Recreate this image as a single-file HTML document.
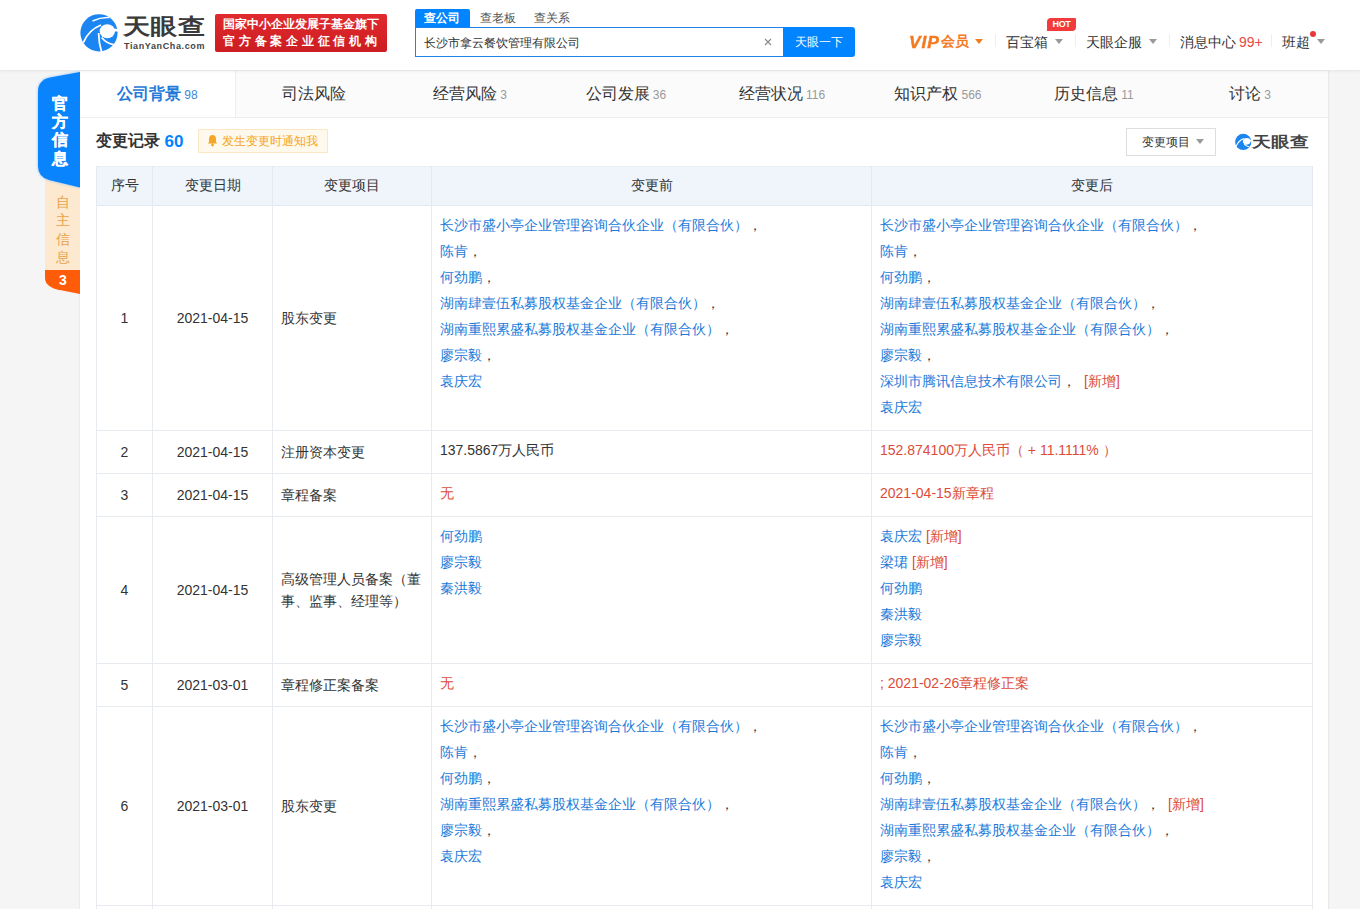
<!DOCTYPE html>
<html><head><meta charset="utf-8">
<style>
*{box-sizing:border-box;margin:0;padding:0}
html,body{width:1360px;height:909px;overflow:hidden}
body{background:#f5f5f5;font-family:"Liberation Sans",sans-serif;color:#333;font-size:14px;position:relative}
.abs{position:absolute}
#hdr{position:absolute;left:0;top:0;width:1360px;height:70px;background:#fff;box-shadow:0 1px 3px rgba(0,0,0,.08);z-index:5}
.nowrap{white-space:nowrap}
.tri{width:0;height:0;border-left:4.5px solid transparent;border-right:4.5px solid transparent;border-top:5px solid #999}
.sep{top:34px;width:1px;height:13px;background:#eee}
/* side tabs */
#side1{position:absolute;left:38px;top:72px;width:42px;height:115px;z-index:3}
#side2{position:absolute;left:45px;top:170px;width:35px;height:124px;z-index:2}
/* card */
#card{position:absolute;left:80px;top:71px;width:1248px;height:900px;background:#fff;box-shadow:1px 0 1px rgba(0,0,0,.05),-1px 0 1px rgba(0,0,0,.04)}
#sec{position:absolute;left:0;top:0;z-index:4}
#tabs{position:absolute;left:0;top:0;width:1248px;height:47px;background:#fbfbfb;border-bottom:1px solid #eee}
.tab{position:absolute;top:0;width:156px;height:46px;line-height:45px;text-align:center;font-size:16px;color:#333;white-space:nowrap}
.tab .n{font-size:12px;color:#999;margin-left:3px}
.tab.on{background:#fff;color:#1f7ad9;font-weight:bold;border-right:1px solid #eee}
.tab.on .n{color:#3d86d6;font-weight:normal}
table{position:absolute;left:16px;top:95px;width:1216px;border-collapse:collapse;table-layout:fixed}
th{background:#eff5fb;height:39px;font-weight:normal;font-size:14px;color:#333;border:1px solid #e3e9ef;border-top-color:#e9eef3}
td{border:1px solid #e7eaee;font-size:14px;color:#333;padding:6px 8px 10px;line-height:26px;vertical-align:top}
td.c,td.m{vertical-align:middle;padding:8px;line-height:22px}
td.c{text-align:center}
.bl{color:#1a7ad9}
.rd{color:#dd4b39}
.cm{color:#333}
</style></head><body>
<div id="hdr">
  <svg class="abs" style="left:76px;top:10px" width="46" height="46" viewBox="0 0 46 46">
    <circle cx="23" cy="22.8" r="18.6" fill="#1b86f2"/>
    <ellipse cx="31.3" cy="21.3" rx="7.6" ry="7" fill="#fff"/>
    <path d="M36,18.6 Q40,18.8 42,19 L42,21.4 Q39,21.4 36,21.6 Z" fill="#fff"/>
    <path d="M7.3,32.6 Q12.5,20 25,15" stroke="#fff" stroke-width="1.8" fill="none"/>
    <path d="M16.5,11 Q25,7 33.5,7.6" stroke="#fff" stroke-width="1.5" fill="none"/>
    <path d="M22.6,23 Q22.8,33 25.6,42" stroke="#fff" stroke-width="1.8" fill="none"/>
    <path d="M25.6,27.5 Q30.5,33.5 37.8,34.6" stroke="#fff" stroke-width="1.8" fill="none"/>
  </svg>
  <div class="abs nowrap" id="logotxt" style="left:122px;top:9px;font-size:26px;line-height:34px;font-weight:bold;color:#3a3a3a;letter-spacing:0px;transform-origin:0 0;transform:translate(1px,3px) scale(1.05,0.85)">天眼查</div>
  <div class="abs nowrap" style="left:124px;top:41px;font-size:9px;line-height:11px;font-weight:bold;color:#444;letter-spacing:0.62px">TianYanCha.com</div>
  <div class="abs" style="left:215px;top:14px;width:172px;height:38px;border-radius:2px;background:linear-gradient(#e02a2e,#cc1d22)"></div>
  <div class="abs nowrap" style="left:223px;top:15px;font-size:12px;line-height:18px;color:#fff;font-weight:bold">国家中小企业发展子基金旗下</div>
  <div class="abs nowrap" style="left:223px;top:32px;font-size:12px;line-height:18px;color:#fff;font-weight:bold;letter-spacing:3.75px">官方备案企业征信机构</div>
  <div class="abs" style="left:415px;top:9px;width:55px;height:19px;background:#0084ff;border-radius:2px 2px 0 0"></div>
  <div class="abs nowrap" style="left:424px;top:9px;font-size:12px;line-height:18px;color:#fff;font-weight:bold">查公司</div>
  <div class="abs nowrap" style="left:480px;top:9px;font-size:12px;line-height:18px;color:#555">查老板</div>
  <div class="abs nowrap" style="left:534px;top:9px;font-size:12px;line-height:18px;color:#555">查关系</div>
  <div class="abs" style="left:415px;top:27px;width:370px;height:30px;border:1px solid #1f82e6;border-right:none;background:#fff"></div>
  <div class="abs nowrap" style="left:424px;top:34px;font-size:12px;line-height:18px;color:#333">长沙市拿云餐饮管理有限公司</div>
  <svg class="abs" style="left:764px;top:38px" width="8" height="8" viewBox="0 0 8 8"><path d="M1,1 L7,7 M7,1 L1,7" stroke="#8a8a8a" stroke-width="1.2"/></svg>
  <div class="abs" style="left:783px;top:27px;width:72px;height:30px;background:#0084ff;border-radius:0 3px 3px 0"></div>
  <div class="abs nowrap" style="left:795px;top:33px;font-size:12px;line-height:18px;color:#fff">天眼一下</div>
  <div class="abs nowrap" style="left:909px;top:32px;font-size:16.5px;line-height:20px;color:#f47a1f;font-weight:bold;font-style:italic;letter-spacing:0.8px;-webkit-text-stroke:0.4px #f47a1f;transform-origin:0 0;transform:scaleX(1.06)">VIP</div><div class="abs nowrap" style="left:941px;top:32px;font-size:13.5px;line-height:20px;color:#f47a1f;font-weight:bold">会员</div>
  <div class="abs tri" style="left:975px;top:39px;border-top-color:#f47a1f"></div>
  <div class="abs sep" style="left:995px"></div>
  <div class="abs nowrap" style="left:1006px;top:32px;font-size:14px;line-height:20px;color:#333">百宝箱</div>
  <div class="abs tri" style="left:1055px;top:39px"></div>
  <div class="abs" style="left:1047px;top:18px;width:29px;height:13px;background:#f33b3b;border-radius:4px 1px 4px 0"></div>
  <div class="abs nowrap" style="left:1047px;top:18px;width:29px;text-align:center;font-size:9px;line-height:13px;color:#fff;font-weight:bold;letter-spacing:-0.3px">HOT</div>
  <div class="abs sep" style="left:1075px"></div>
  <div class="abs nowrap" style="left:1086px;top:32px;font-size:14px;line-height:20px;color:#333">天眼企服</div>
  <div class="abs tri" style="left:1149px;top:39px"></div>
  <div class="abs sep" style="left:1169px"></div>
  <div class="abs nowrap" style="left:1180px;top:32px;font-size:14px;line-height:20px;color:#333">消息中心<span style="color:#e94a3f;font-size:14px;margin-left:3px">99+</span></div>
  <div class="abs sep" style="left:1271px"></div>
  <div class="abs nowrap" style="left:1282px;top:32px;font-size:14px;line-height:20px;color:#333">班超</div>
  <div class="abs" style="left:1310px;top:31px;width:6px;height:6px;border-radius:3px;background:#e8383d"></div>
  <div class="abs tri" style="left:1317px;top:39px"></div>
</div>
<div id="sec">
  <div class="abs nowrap" style="left:96px;top:130px;font-size:16px;line-height:22px;font-weight:bold;color:#333">变更记录 <span style="color:#0084ff;font-size:17px;position:relative;top:1px">60</span></div>
  <div class="abs" style="left:198px;top:129px;width:130px;height:24px;background:#fff8ec;border:1px solid #fde6c2;border-radius:1px"></div>
  <svg class="abs" style="left:206px;top:134px" width="13" height="13" viewBox="0 0 13 13"><path d="M6.5,1 C4,1 3,3 3,5.2 L3,8 L1.8,9.6 L11.2,9.6 L10,8 L10,5.2 C10,3 9,1 6.5,1 Z" fill="#f5a623"/><circle cx="6.5" cy="11" r="1.4" fill="#f5a623"/></svg>
  <div class="abs nowrap" style="left:222px;top:132px;font-size:12px;line-height:18px;color:#f5a623">发生变更时通知我</div>
  <div class="abs" style="left:1126px;top:128px;width:90px;height:28px;border:1px solid #ddd;background:#fff"></div>
  <div class="abs nowrap" style="left:1142px;top:133px;font-size:12px;line-height:18px;color:#333">变更项目</div>
  <div class="abs tri" style="left:1196px;top:139px;border-top-color:#999"></div>
  <svg class="abs" style="left:1233px;top:132px" width="20" height="20" viewBox="0 0 46 46">
    <circle cx="23.5" cy="22.8" r="18.6" fill="#1b86f2"/>
    <ellipse cx="31.5" cy="21.5" rx="8.6" ry="7.6" fill="#fff"/>
    <path d="M36,18 Q40,18.2 43,18.5 L43,22 Q39,22 36,22.2 Z" fill="#fff"/>
    <path d="M7.3,32.6 Q12.5,20 25,15" stroke="#fff" stroke-width="2.6" fill="none"/>
    <path d="M25.6,27.5 Q30.5,33.5 37.8,34.6" stroke="#fff" stroke-width="2.6" fill="none"/>
  </svg>
  <div class="abs nowrap" style="left:1252px;top:130px;font-size:19px;line-height:24px;font-weight:bold;color:#444;transform-origin:0 0;transform:translate(0,3px) scale(1.0,0.8)">天眼查</div>
</div>
<svg class="abs" style="left:0;top:60px;z-index:3" width="80" height="250" viewBox="0 60 80 250">
  <defs><filter id="sh" x="-30%" y="-10%" width="160%" height="130%"><feGaussianBlur stdDeviation="1.6"/></filter></defs>
  <path d="M80,176 L80,294 L60,290 Q45,287 45,278 L45,176 Z" fill="#fde9cf"/>
  <path d="M80,270 L80,294 L60,290 Q45,287 45,278 L45,270 Z" fill="#ff5c0a"/>
  <path d="M80,72 L50,77.5 Q38,80 38,92 L38,166 Q38,177 49,180 L80,187.5 Z" fill="#6fb4ff" filter="url(#sh)" opacity=".8"/>
  <path d="M80,72 L50,77.5 Q38,80 38,92 L38,166 Q38,177 49,180 L80,187.5 Z" fill="#0a84fc"/>
</svg>
<div class="abs" style="left:50px;top:94.5px;width:20px;text-align:center;font-size:16px;line-height:18.4px;font-weight:bold;color:#fff;z-index:4;-webkit-text-stroke:0.3px #fff">官<br>方<br>信<br>息</div>
<div class="abs" style="left:53px;top:193px;width:20px;text-align:center;font-size:14px;line-height:18.4px;color:#e9a24a;z-index:4">自<br>主<br>信<br>息</div>
<div class="abs" style="left:53px;top:271px;width:20px;text-align:center;font-size:14px;line-height:18px;font-weight:bold;color:#fff;z-index:4">3</div>
<div id="card">
  <div id="tabs">
    <div class="tab on" style="left:0">公司背景<span class="n">98</span></div>
    <div class="tab" style="left:156px">司法风险</div>
    <div class="tab" style="left:312px">经营风险<span class="n">3</span></div>
    <div class="tab" style="left:468px">公司发展<span class="n">36</span></div>
    <div class="tab" style="left:624px">经营状况<span class="n">116</span></div>
    <div class="tab" style="left:780px">知识产权<span class="n">566</span></div>
    <div class="tab" style="left:936px">历史信息<span class="n">11</span></div>
    <div class="tab" style="left:1092px">讨论<span class="n">3</span></div>
  </div>
  <table>
    <colgroup><col style="width:56px"><col style="width:120px"><col style="width:159px"><col style="width:440px"><col style="width:441px"></colgroup>
    <thead><tr><th>序号</th><th>变更日期</th><th>变更项目</th><th>变更前</th><th>变更后</th></tr></thead>
    <tbody>
    <tr><td class="c">1</td><td class="c">2021-04-15</td><td class="m">股东变更</td>
      <td><div class="bl">长沙市盛小亭企业管理咨询合伙企业（有限合伙）<span class="cm">，</span></div><div class="bl">陈肯<span class="cm">，</span></div><div class="bl">何劲鹏<span class="cm">，</span></div><div class="bl">湖南肆壹伍私募股权基金企业（有限合伙）<span class="cm">，</span></div><div class="bl">湖南重熙累盛私募股权基金企业（有限合伙）<span class="cm">，</span></div><div class="bl">廖宗毅<span class="cm">，</span></div><div class="bl">袁庆宏</div></td>
      <td><div class="bl">长沙市盛小亭企业管理咨询合伙企业（有限合伙）<span class="cm">，</span></div><div class="bl">陈肯<span class="cm">，</span></div><div class="bl">何劲鹏<span class="cm">，</span></div><div class="bl">湖南肆壹伍私募股权基金企业（有限合伙）<span class="cm">，</span></div><div class="bl">湖南重熙累盛私募股权基金企业（有限合伙）<span class="cm">，</span></div><div class="bl">廖宗毅<span class="cm">，</span></div><div class="bl">深圳市腾讯信息技术有限公司<span class="cm">，</span><span class="rd" style="margin-left:8px">[新增]</span></div><div class="bl">袁庆宏</div></td></tr>
    <tr><td class="c">2</td><td class="c">2021-04-15</td><td class="m">注册资本变更</td><td>137.5867万人民币</td><td class="rd">152.874100万人民币（ + 11.1111% ）</td></tr>
    <tr><td class="c">3</td><td class="c">2021-04-15</td><td class="m">章程备案</td><td class="rd">无</td><td class="rd">2021-04-15新章程</td></tr>
    <tr><td class="c">4</td><td class="c">2021-04-15</td><td class="m">高级管理人员备案（董事、监事、经理等）</td>
      <td><div class="bl">何劲鹏</div><div class="bl">廖宗毅</div><div class="bl">秦洪毅</div></td>
      <td><div class="bl">袁庆宏 <span class="rd">[新增]</span></div><div class="bl">梁珺 <span class="rd">[新增]</span></div><div class="bl">何劲鹏</div><div class="bl">秦洪毅</div><div class="bl">廖宗毅</div></td></tr>
    <tr><td class="c">5</td><td class="c">2021-03-01</td><td class="m">章程修正案备案</td><td class="rd">无</td><td class="rd">; 2021-02-26章程修正案</td></tr>
    <tr><td class="c">6</td><td class="c">2021-03-01</td><td class="m">股东变更</td>
      <td><div class="bl">长沙市盛小亭企业管理咨询合伙企业（有限合伙）<span class="cm">，</span></div><div class="bl">陈肯<span class="cm">，</span></div><div class="bl">何劲鹏<span class="cm">，</span></div><div class="bl">湖南重熙累盛私募股权基金企业（有限合伙）<span class="cm">，</span></div><div class="bl">廖宗毅<span class="cm">，</span></div><div class="bl">袁庆宏</div></td>
      <td><div class="bl">长沙市盛小亭企业管理咨询合伙企业（有限合伙）<span class="cm">，</span></div><div class="bl">陈肯<span class="cm">，</span></div><div class="bl">何劲鹏<span class="cm">，</span></div><div class="bl">湖南肆壹伍私募股权基金企业（有限合伙）<span class="cm">，</span><span class="rd" style="margin-left:8px">[新增]</span></div><div class="bl">湖南重熙累盛私募股权基金企业（有限合伙）<span class="cm">，</span></div><div class="bl">廖宗毅<span class="cm">，</span></div><div class="bl">袁庆宏</div></td></tr>
    <tr><td class="c">7</td><td class="c">2021-03-01</td><td class="m">注册资本变更</td><td>100万人民币</td><td class="rd">137.5867万人民币</td></tr>
    </tbody>
  </table>
</div>
</body></html>
